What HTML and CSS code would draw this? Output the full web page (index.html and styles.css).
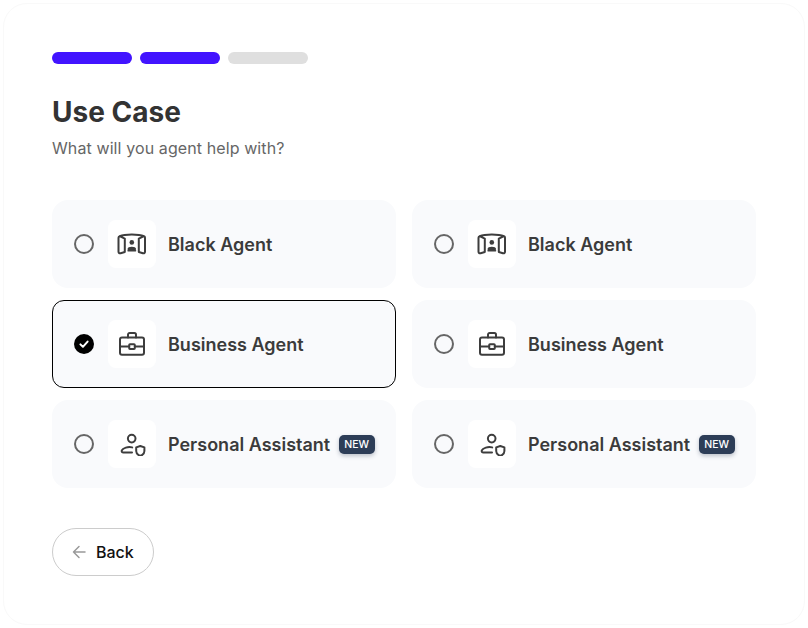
FILE: index.html
```html
<!DOCTYPE html>
<html lang="en">
<head>
<meta charset="utf-8">
<title>Use Case</title>
<link rel="stylesheet" href="styles.css">
</head>
<body>
<main class="panel">
  <div class="progress">
    <span class="step step-done"></span>
    <span class="step step-done"></span>
    <span class="step"></span>
  </div>
  <h1 class="title">Use Case</h1>
  <p class="subtitle">What will you agent help with?</p>
  <div class="options">
    <div class="option">
      <span class="radio"></span>
      <span class="icon-box"><svg class="icon" viewBox="0 0 32 24"><path d="M3.6 4.2C9 2 22.6 2 28 4.2M3.6 4.2C2.8 4.4 2.5 5 2.5 5.8V19.8C2.5 21 3.5 21.6 4.6 21.2L8.8 20V6.6ZM28 4.2C28.8 4.4 29 5 29 5.8V19.8C29 21 28 21.6 26.9 21.2L22.8 20V6.6Z"/><circle class="solid" cx="15.8" cy="10.4" r="2.3"/><path class="solid thin" d="M12.2 17.2C12.6 14.9 19 14.9 19.4 17.2ZM12 18.8H19.6"/></svg></span>
      <span class="label">Black Agent</span>
    </div>
    <div class="option">
      <span class="radio"></span>
      <span class="icon-box"><svg class="icon" viewBox="0 0 32 24"><path d="M3.6 4.2C9 2 22.6 2 28 4.2M3.6 4.2C2.8 4.4 2.5 5 2.5 5.8V19.8C2.5 21 3.5 21.6 4.6 21.2L8.8 20V6.6ZM28 4.2C28.8 4.4 29 5 29 5.8V19.8C29 21 28 21.6 26.9 21.2L22.8 20V6.6Z"/><circle class="solid" cx="15.8" cy="10.4" r="2.3"/><path class="solid thin" d="M12.2 17.2C12.6 14.9 19 14.9 19.4 17.2ZM12 18.8H19.6"/></svg></span>
      <span class="label">Black Agent</span>
    </div>
    <div class="option option-selected">
      <span class="radio radio-checked"><svg class="check" viewBox="0 0 20 20"><path d="M6.4 10.4L8.9 12.8L13.6 7.6"/></svg></span>
      <span class="icon-box"><svg class="icon" viewBox="0 0 32 24"><rect x="4" y="5.4" width="24" height="17.4" rx="2"/><path d="M12 5.4V2.8C12 1.6 12.8 1 13.6 1H18.4C19.2 1 20 1.6 20 2.8V5.4M4 14.4H13.2M18.8 14.4H28"/><rect x="13.2" y="12.2" width="5.6" height="4.8" rx="0.8"/></svg></span>
      <span class="label">Business Agent</span>
    </div>
    <div class="option">
      <span class="radio"></span>
      <span class="icon-box"><svg class="icon" viewBox="0 0 32 24"><rect x="4" y="5.4" width="24" height="17.4" rx="2"/><path d="M12 5.4V2.8C12 1.6 12.8 1 13.6 1H18.4C19.2 1 20 1.6 20 2.8V5.4M4 14.4H13.2M18.8 14.4H28"/><rect x="13.2" y="12.2" width="5.6" height="4.8" rx="0.8"/></svg></span>
      <span class="label">Business Agent</span>
    </div>
    <div class="option">
      <span class="radio"></span>
      <span class="icon-box"><svg class="icon" viewBox="0 0 32 24"><circle cx="15.7" cy="6.6" r="3.8"/><path d="M16.2 15.4C12 14.4 6.8 16 5.8 18.4C5.4 19.6 6 20.6 7.4 20.6H16"/><path d="M24.3 14L28.4 15.4V19C28.4 21.4 26.8 23 24.3 24C21.8 23 20.2 21.4 20.2 19V15.4Z"/></svg></span>
      <span class="label">Personal Assistant</span>
      <span class="badge">NEW</span>
    </div>
    <div class="option">
      <span class="radio"></span>
      <span class="icon-box"><svg class="icon" viewBox="0 0 32 24"><circle cx="15.7" cy="6.6" r="3.8"/><path d="M16.2 15.4C12 14.4 6.8 16 5.8 18.4C5.4 19.6 6 20.6 7.4 20.6H16"/><path d="M24.3 14L28.4 15.4V19C28.4 21.4 26.8 23 24.3 24C21.8 23 20.2 21.4 20.2 19V15.4Z"/></svg></span>
      <span class="label">Personal Assistant</span>
      <span class="badge">NEW</span>
    </div>
  </div>
  <button class="back" type="button">
    <svg class="arrow" viewBox="0 0 16 16"><path d="M14 8H2.5M8 2.5L2.5 8L8 13.5"/></svg>
    <span>Back</span>
  </button>
</main>
</body>
</html>
```

FILE: styles.css
```css
* { box-sizing: border-box; }

html, body { margin: 0; height: 100%; }

body {
  padding: 3px;
  background: #fff;
  font-family: Inter, "Liberation Sans", sans-serif;
  overflow: hidden;
}

.panel {
  width: 802px;
  height: 622px;
  padding: 48px;
  background: #fff;
  border: 1px solid #f9f9f9;
  border-radius: 24px;
}

.progress { display: flex; gap: 8px; }

.step {
  width: 80px;
  height: 12px;
  border-radius: 6px;
  background: #dfdfdf;
}

.step-done { background: #4214ff; }

.title {
  margin: 30px 0 0;
  font-size: 28px;
  line-height: 36px;
  font-weight: 700;
  color: #333;
}

.subtitle {
  margin: 8px 0 0;
  font-size: 16px;
  line-height: 20px;
  letter-spacing: 0.1px;
  color: #666;
}

.options {
  display: grid;
  grid-template-columns: 344px 344px;
  grid-auto-rows: 88px;
  column-gap: 16px;
  row-gap: 12px;
  margin-top: 42px;
}

.option {
  display: flex;
  align-items: center;
  padding: 0 20px 0 22px;
  background: #f9fafc;
  border-radius: 16px;
}

.option-selected {
  padding-left: 21px;
  border: 1px solid #000;
  border-radius: 12px;
}

.radio {
  flex: none;
  width: 20px;
  height: 20px;
  border: 2px solid #666;
  border-radius: 50%;
}

.radio-checked {
  border: 0;
  background: #000;
}

.check {
  display: block;
  width: 20px;
  height: 20px;
  fill: none;
  stroke: #fff;
  stroke-width: 2;
  stroke-linecap: round;
  stroke-linejoin: round;
}

.icon-box {
  flex: none;
  display: flex;
  align-items: center;
  justify-content: center;
  width: 48px;
  height: 48px;
  margin: 0 12px 0 14px;
  background: #fff;
  border-radius: 8px;
}

.icon {
  width: 32px;
  height: 24px;
  fill: none;
  stroke: #3d3d3d;
  stroke-width: 2;
  stroke-linecap: round;
  stroke-linejoin: round;
}

.icon .solid { fill: #3d3d3d; stroke: none; }

.icon .thin { stroke: #3d3d3d; stroke-width: 1.4; }

.label {
  padding-top: 2px;
  font-size: 18px;
  line-height: 24px;
  font-weight: 600;
  color: #3b3b3b;
  white-space: nowrap;
}

.badge {
  flex: none;
  width: 36px;
  height: 19px;
  margin-left: 8.5px;
  line-height: 19px;
  text-align: center;
  font-size: 10.5px;
  font-weight: 500;
  color: #fff;
  background: #2d3d57;
  border-radius: 5px;
  box-shadow: 0 2px 4px rgba(45, 61, 87, 0.3);
}

.back {
  display: flex;
  align-items: center;
  gap: 9px;
  width: 102px;
  height: 48px;
  margin-top: 40px;
  padding: 0 0 0 18px;
  font-family: inherit;
  font-size: 16px;
  font-weight: 500;
  color: #111;
  background: #fff;
  border: 1px solid #ccc;
  border-radius: 24px;
}

.arrow {
  width: 16px;
  height: 16px;
  fill: none;
  stroke: #999;
  stroke-width: 1.5;
  stroke-linecap: round;
  stroke-linejoin: round;
}
```
